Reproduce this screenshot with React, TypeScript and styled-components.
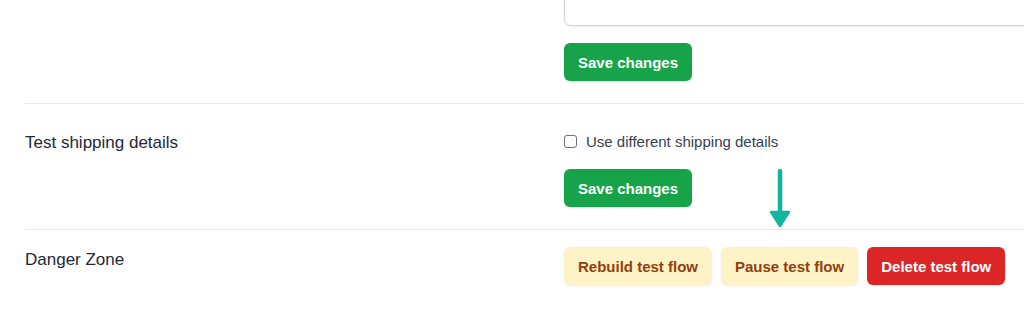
import React from "react";
import styled, { createGlobalStyle } from "styled-components";

const GlobalStyle = createGlobalStyle`
  body {
    margin: 0;
    background: #ffffff;
    font-family: "Liberation Sans", Arial, sans-serif;
    overflow: hidden;
  }
`;

const Page = styled.div`
  position: relative;
  width: 1024px;
  height: 317px;
  overflow: hidden;
`;

const Sections = styled.div`
  margin-top: -60px;
  padding-left: 25px;
`;

const Section = styled.div<{ $divider?: boolean }>`
  display: grid;
  grid-template-columns: 539px 1fr;
  padding: 17px 0 22px;
  border-top: ${(p) => (p.$divider ? "1px solid #e5e7eb" : "none")};
`;

const Label = styled.div<{ $offset?: number }>`
  font-size: 17px;
  line-height: 24px;
  color: #1f2937;
  margin-top: ${(p) => p.$offset ?? 0}px;
`;

const Content = styled.div`
  display: flex;
  flex-direction: column;
  align-items: flex-start;
`;

const TextArea = styled.div`
  width: 520px;
  height: 67px;
  margin-bottom: -1px;
  border: 1px solid #d1d5db;
  border-radius: 7px;
  box-shadow: 0 1px 2px rgba(0, 0, 0, 0.08);
  background: #fff;
`;

const CheckRow = styled.label`
  display: flex;
  align-items: center;
  gap: 9px;
  height: 20px;
  margin-top: 10px;
  font-size: 15px;
  color: #374151;
`;

const Box = styled.span`
  width: 11px;
  height: 11px;
  border: 1px solid #6b7280;
  border-radius: 3px;
  background: #fff;
`;

const Actions = styled.div<{ $top?: number }>`
  display: flex;
  gap: 9px;
  margin-top: ${(p) => p.$top ?? 0}px;
`;

const tones = {
  green: { bg: "#16a34a", fg: "#ffffff" },
  amber: { bg: "#fef3c7", fg: "#92400e" },
  red: { bg: "#dc2626", fg: "#ffffff" },
};

const Button = styled.button<{ $tone: keyof typeof tones }>`
  height: 38px;
  padding: 0 14px;
  border: none;
  border-radius: 6px;
  background: ${(p) => tones[p.$tone].bg};
  color: ${(p) => tones[p.$tone].fg};
  font-family: "Liberation Sans", Arial, sans-serif;
  font-weight: 700;
  font-size: 15px;
  box-shadow: 0 1px 2px rgba(0, 0, 0, 0.08);
  cursor: pointer;
`;

const Arrow = styled.svg`
  position: absolute;
  left: 767px;
  top: 166px;
`;

export default function App() {
  return (
    <Page>
      <GlobalStyle />
      <Sections>
        <Section>
          <Label />
          <Content>
            <TextArea />
            <Actions $top={18}>
              <Button $tone="green">Save changes</Button>
            </Actions>
          </Content>
        </Section>
        <Section $divider>
          <Label $offset={10}>Test shipping details</Label>
          <Content>
            <CheckRow>
              <Box />
              Use different shipping details
            </CheckRow>
            <Actions $top={18}>
              <Button $tone="green">Save changes</Button>
            </Actions>
          </Content>
        </Section>
        <Section $divider>
          <Label $offset={1}>Danger Zone</Label>
          <Content>
            <Actions>
              <Button $tone="amber">Rebuild test flow</Button>
              <Button $tone="amber">Pause test flow</Button>
              <Button $tone="red">Delete test flow</Button>
            </Actions>
          </Content>
        </Section>
      </Sections>
      <Arrow width="28" height="64" viewBox="0 0 28 64">
        <path
          d="M13 5 L13 50"
          stroke="#12b5a0"
          strokeWidth="4.5"
          strokeLinecap="round"
          fill="none"
        />
        <path
          d="M4 46 L22 46 L13 60 Z"
          fill="#12b5a0"
          stroke="#12b5a0"
          strokeWidth="2.5"
          strokeLinejoin="round"
        />
      </Arrow>
    </Page>
  );
}
